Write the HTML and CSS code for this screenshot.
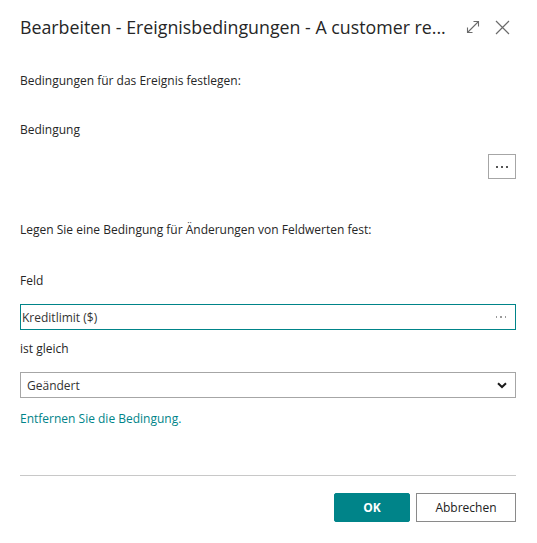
FILE: index.html
```html
<!DOCTYPE html>
<html lang="de">
<head>
<meta charset="utf-8">
<title>Bearbeiten - Ereignisbedingungen</title>
<link rel="stylesheet" href="styles.css">
</head>
<body>
<div class="dialog">
  <header class="head">
    <h1 class="title">Bearbeiten - Ereignisbedingungen - A customer re...</h1>
    <div class="head-icons">
      <svg class="ico" width="14" height="14" viewBox="0 0 14 14" fill="none" stroke="#6b6b6b" stroke-width="1.1">
        <path d="M1.5 12.5 L12.5 1.5"/>
        <path d="M7.5 1.5 H12.5 V6.5"/>
        <path d="M1.5 7.5 V12.5 H6.5"/>
      </svg>
      <svg class="ico close" width="15" height="15" viewBox="0 0 15 15" fill="none" stroke="#6b6b6b" stroke-width="1.2">
        <path d="M1 1 L14 14 M14 1 L1 14"/>
      </svg>
    </div>
  </header>

  <p class="text t1">Bedingungen für das Ereignis festlegen:</p>
  <p class="text t2">Bedingung</p>
  <div class="btn-row">
    <button class="dots-btn" type="button"><span class="dot"></span><span class="dot"></span><span class="dot"></span></button>
  </div>

  <p class="text t3">Legen Sie eine Bedingung für Änderungen von Feldwerten fest:</p>
  <p class="text t4">Feld</p>
  <div class="field focus">
    <span class="field-val">Kreditlimit ($)</span>
    <span class="field-dots"><span class="sdot"></span><span class="sdot"></span><span class="sdot"></span></span>
  </div>
  <p class="text t5">ist gleich</p>
  <div class="field select">
    <span class="field-val">Geändert</span>
    <svg class="chev" width="10" height="7" viewBox="0 0 10 7" fill="none" stroke="#1a1a1a" stroke-width="2">
      <path d="M1 1.2 L5 5 L9 1.2"/>
    </svg>
  </div>
  <a class="link" href="#">Entfernen Sie die Bedingung.</a>

  <hr class="divider">
  <footer class="foot">
    <button class="btn primary" type="button">OK</button>
    <button class="btn" type="button">Abbrechen</button>
  </footer>
</div>
</body>
</html>
```

FILE: styles.css
```css
* { box-sizing: border-box; }
html, body { margin: 0; padding: 0; background: #fff; }
body {
  font-family: "Open Sans", "Noto Sans", "Liberation Sans", sans-serif;
  color: #212121;
  width: 537px;
}
.dialog {
  padding: 15px 21px 0 20px;
  display: flex;
  flex-direction: column;
}
.head {
  display: flex;
  align-items: center;
  height: 24px;
}
.title {
  flex: 1;
  margin: 0;
  font-size: 17.8px;
  font-weight: 400;
  line-height: 24px;
  color: #262626;
  white-space: nowrap;
  overflow: hidden;
}
.head-icons {
  display: flex;
  align-items: center;
  gap: 15px;
  margin-right: 6px;
}
.text {
  margin: 0;
  font-size: 12px;
  line-height: 16px;
  color: #262626;
}
.t1 { margin-top: 34px; }
.t2 { margin-top: 33px; }
.btn-row {
  display: flex;
  justify-content: flex-end;
  margin-top: 16px;
}
.dots-btn {
  width: 28px;
  height: 25px;
  border: 1px solid #a6a6a6;
  background: #fff;
  padding: 0;
  display: flex;
  align-items: center;
  justify-content: center;
  gap: 3px;
}
.dot { width: 2px; height: 2px; background: #555; }
.t3 { margin-top: 43px; }
.t4 { margin-top: 35px; }
.field {
  margin-top: 15px;
  height: 26px;
  border: 1px solid #a6a6a6;
  display: flex;
  align-items: center;
  justify-content: space-between;
  padding: 0 7px 0 6px;
  font-size: 12px;
  color: #333;
}
.field.focus { border-color: #008489; padding-left: 1px; }
.field-dots { display: flex; gap: 3px; margin-right: 2px; }
.sdot { width: 1.5px; height: 1.5px; background: #999; }
.t5 { margin-top: 11px; }
.select { margin-top: 15px; }
.chev { margin-right: 1px; }
.link {
  margin-top: 13px;
  font-size: 12px;
  line-height: 16px;
  color: #008489;
  text-decoration: none;
  align-self: flex-start;
}
.divider {
  margin: 48px 0 0 0;
  border: 0;
  border-top: 1px solid #c8c8c8;
  height: 0;
}
.foot {
  display: flex;
  justify-content: flex-end;
  gap: 6px;
  margin-top: 17px;
}
.btn {
  height: 29px;
  min-width: 100px;
  border: 1px solid #8a8a8a;
  background: #fff;
  font-family: inherit;
  font-size: 12px;
  color: #212121;
  padding: 0 12px;
}
.btn.primary {
  min-width: 76px;
  background: #008489;
  border-color: #008489;
  color: #fff;
  font-weight: 700;
  border-radius: 2px;
}
```
